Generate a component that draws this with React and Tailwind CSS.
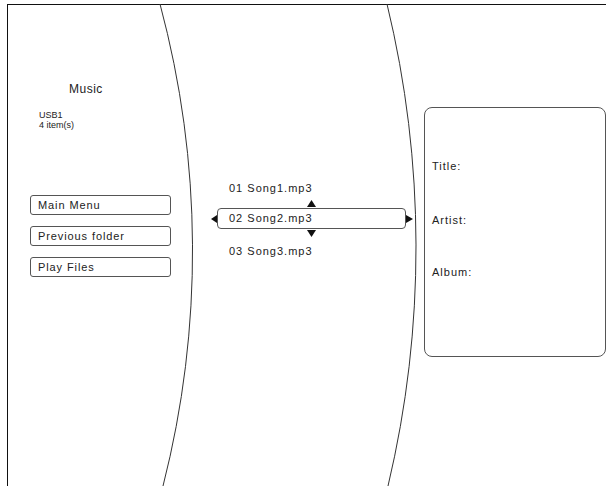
import React from "react";

const songs = ["01 Song1.mp3", "02 Song2.mp3", "03 Song3.mp3"];
const menu = ["Main Menu", "Previous folder", "Play Files"];

function Arrow({ dir, className }) {
  // small filled triangles around the selected song
  const shapes = {
    up: { w: 9, h: 7, pts: "4.5,0 9,7 0,7" },
    down: { w: 9, h: 7, pts: "0,0 9,0 4.5,7" },
    left: { w: 6, h: 8, pts: "0,4 6,0 6,8" },
    right: { w: 7, h: 8, pts: "0,0 7,4 0,8" },
  };
  const s = shapes[dir];
  return (
    <svg width={s.w} height={s.h} viewBox={`0 0 ${s.w} ${s.h}`} className={`absolute ${className}`}>
      <polygon points={s.pts} fill="#111" />
    </svg>
  );
}

export default function App() {
  return (
    <div className="relative w-[606px] h-[486px] overflow-hidden bg-white pt-[4px] pl-[7px] font-['Liberation_Sans',Arial,sans-serif] text-[#222]">
      {/* curved dividers */}
      <svg width="606" height="486" className="absolute inset-0 pointer-events-none">
        <path d="M160 4 A952 952 0 0 1 163 486" fill="none" stroke="#333" strokeWidth="1" />
        <path d="M387 4 A1033 1033 0 0 1 388 486" fill="none" stroke="#333" strokeWidth="1" />
      </svg>

      <div className="flex h-full border-t border-l border-[#111]">
        {/* left column */}
        <div className="w-[190px] flex flex-col pt-[77px]">
          <div className="pl-[61px] text-[12px] leading-[14px] tracking-[0.5px]">Music</div>
          <div className="pl-[31px] mt-[14px] text-[9px] leading-[10px]">
            <div>USB1</div>
            <div>4 item(s)</div>
          </div>
          <div className="mt-[65px] ml-[22px] w-[141px] flex flex-col gap-[11px]">
            {menu.map((m) => (
              <div
                key={m}
                className="h-[20px] flex items-center pl-[7px] border border-[#555] rounded-[3px] text-[11px] tracking-[0.9px]"
              >
                {m}
              </div>
            ))}
          </div>
        </div>

        {/* song list */}
        <div className="w-[226px] flex flex-col pt-[177px] pl-[19px] text-[11px] leading-[13px] tracking-[1px]">
          <div className="pl-[12px]">{songs[0]}</div>
          <div className="relative mt-[13px] w-[189px] h-[21px] flex items-center pl-[11px] border border-[#555] rounded-[4px]">
            {songs[1]}
            <Arrow dir="up" className="left-[89px] top-[-9px]" />
            <Arrow dir="down" className="left-[89px] top-[21px]" />
            <Arrow dir="left" className="left-[-7px] top-[6px]" />
            <Arrow dir="right" className="left-[188px] top-[6px]" />
          </div>
          <div className="pl-[12px] mt-[16px]">{songs[2]}</div>
        </div>

        {/* info panel */}
        <div className="w-[182px] mt-[102px] h-[250px] border border-[#555] rounded-[8px] pl-[7px] pt-[52px] flex flex-col text-[11px] leading-[13px] tracking-[1px]">
          <div>Title:</div>
          <div className="mt-[41px]">Artist:</div>
          <div className="mt-[39px]">Album:</div>
        </div>
      </div>
    </div>
  );
}
